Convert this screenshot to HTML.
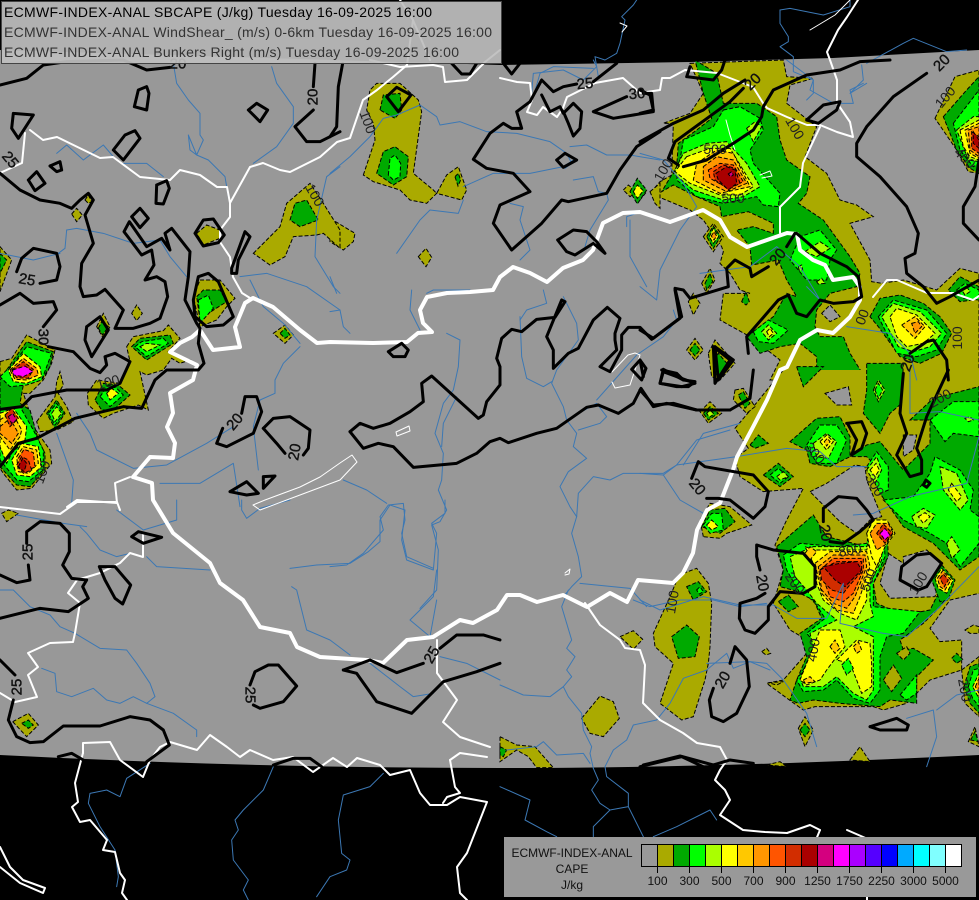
<!DOCTYPE html>
<html><head><meta charset="utf-8"><title>ECMWF-INDEX-ANAL SBCAPE</title>
<style>
html,body{margin:0;padding:0;background:#000;width:979px;height:900px;overflow:hidden}
svg{display:block;font-family:"Liberation Sans",sans-serif}
polygon{vector-effect:non-scaling-stroke;stroke:#000;stroke-width:1;stroke-dasharray:4 2}
polyline{vector-effect:non-scaling-stroke;fill:none;stroke-linejoin:round;stroke-linecap:round}
.o{fill:#aaaa00}.g{fill:#00aa00}.b{fill:#00ff00}.l{fill:#aaff00}.y{fill:#ffff00}.a{fill:#ffc800}.f{fill:#ff9600}.r{fill:#ff5500}.d{fill:#d22d00}.k{fill:#aa0000}.m{fill:#d4007f}.p{fill:#ff00ff}.h{fill:#989898}
.ns{stroke:none}
.dl{stroke:#000;stroke-width:1;stroke-dasharray:4 2;stroke-linecap:butt}
.riv polyline{stroke:#3c78b4;stroke-width:1}
.wt polyline{stroke:#fff;stroke-width:2}
.wth polyline{stroke:#fff;stroke-width:4}
.wl polyline{stroke:#fff;stroke-width:1}
.ct polyline{stroke:#000;stroke-width:3}
.c{font-size:15px;fill:#111;dominant-baseline:central;text-anchor:middle;stroke:#111;stroke-width:.4}
.t{font-size:14px;fill:#222;dominant-baseline:central;text-anchor:middle}
.lg{font-size:14px}
.cb{font-size:12px;fill:#111;text-anchor:middle}
</style></head><body>
<svg width="979" height="900" viewBox="0 0 979 900" xmlns="http://www.w3.org/2000/svg">
<rect width="979" height="900" fill="#000"/>
<path d="M0 50 L500 65 L690 62 L833 58 L979 50 L979 755 Q720 768 500 768 Q250 768 0 755Z" fill="#989898"/>

<!-- north-east fields -->
<g transform="translate(640,60) scale(.33333)">
<polygon class="o" points="150,10 430,0 440,50 520,55 450,75 440,130 530,200 495,290 560,340 600,420 650,435 700,470 630,490 690,600 695,665 725,670 790,660 890,690 960,625 1017,640 1017,960 390,960 420,900 330,830 240,780 250,700 330,700 300,690 270,640 240,610 250,575 245,560 190,480 150,450 30,400 60,365 95,345 100,190 70,190 150,160 190,100"/>
<polygon class="h" points="545,760 570,735 600,770 570,785"/>
<polygon class="g" points="165,0 230,40 250,130 350,130 410,170 420,240 440,300 510,350 500,400 475,430 550,480 630,590 660,640 650,680 570,700 530,750 525,800 540,830 610,830 630,880 670,945 530,945 530,890 480,850 420,860 360,880 320,830 400,770 440,700 470,710 440,660 415,600 335,615 330,560 290,510 340,500 400,520 400,490 325,455 245,470 240,440 170,410 100,375 65,395 110,320 115,250 170,210 215,175 190,100"/>
<polygon class="b" points="250,150 300,140 360,175 370,210 330,270 340,310 420,400 415,440 370,435 350,410 250,430 170,410 110,360 120,300 130,240 220,200"/>
<polygon class="l" points="130,280 200,250 260,245 320,310 360,380 310,410 250,420 160,390 100,340"/>
<polygon class="l" points="320,205 345,185 365,200 340,245"/>
<polygon class="y" points="140,290 210,265 270,265 340,380 300,405 240,405 150,370 105,335"/>
<polygon class="a" points="170,310 230,270 280,280 330,380 240,400 160,360"/>
<polygon class="f" points="190,320 230,290 280,300 320,370 260,395 190,360"/>
<polygon class="r" points="205,330 240,310 280,315 310,365 265,385 210,355"/>
<polygon class="d" points="220,335 250,315 285,325 300,370 265,388 225,360"/>
<polygon class="k" points="228,340 260,320 285,330 290,370 265,390 235,360"/>
<polygon class="m" points="265,342 275,335 280,345 272,350"/>
<polygon class="b" points="450,600 480,530 540,510 590,570 570,600 560,660 500,660"/>
<polygon class="l" points="495,575 540,545 570,565 530,590"/>
<polygon class="l" points="530,665 545,655 555,670 535,672"/>
<polygon class="l" points="475,620 485,615 488,630 478,632"/>
<polygon class="g" points="690,770 720,715 780,705 850,730 900,770 935,820 905,880 840,910 780,890 715,800"/>
<polygon class="b" points="715,770 760,720 860,750 920,820 890,870 830,890 770,880"/>
<polygon class="l" points="725,770 760,730 840,755 905,820 870,860 820,875 775,860"/>
<polygon class="y" points="750,770 770,745 830,765 885,820 850,850 800,860 770,830"/>
<polygon class="a" points="785,795 825,770 855,800 825,835"/>
<polygon class="f" points="815,790 835,785 845,800 825,820"/>
<polygon class="b" points="340,815 385,780 445,810 400,850 355,845"/>
<polygon class="l" points="365,815 385,795 410,820 385,840"/>
<polygon class="y" points="380,815 390,805 400,820 388,830"/>
<polygon class="g" points="925,690 960,650 1017,680 1000,720 960,725"/>
<polygon class="b" points="950,690 975,670 1017,690 1017,720 970,715"/>
<polygon class="l" points="965,690 980,680 990,695 975,705"/>
<polygon class="o" points="885,175 945,50 1017,30 1017,340 985,335 950,270"/>
<polygon class="g" points="910,170 980,90 1017,50 1017,340 990,325 950,270"/>
<polygon class="b" points="940,190 1017,90 1017,310 1000,320 960,270"/>
<polygon class="l" points="950,210 1000,170 1017,170 1017,305 985,300"/>
<polygon class="y" points="960,210 1017,180 1017,300 990,290 970,260"/>
<polygon class="a" points="975,210 1017,190 1017,295 990,280"/>
<polygon class="f" points="985,210 1017,200 1017,290 990,270"/>
<polygon class="d" points="995,215 1017,230 1017,280 995,265"/>
<polygon class="k" points="1000,215 1017,240 1017,265 1000,250"/>
<polygon class="o" points="190,530 220,490 250,530 220,575"/>
<polygon class="g" points="200,530 220,498 242,530 220,565"/>
<polygon class="y" points="208,530 220,505 236,530 220,550"/>
<polygon class="f" points="214,528 222,515 230,528 222,540"/>
<polygon class="o" points="0,370 20,395 0,420"/>
<polygon class="g" points="0,380 10,395 0,410"/>
<polygon class="o" points="140,870 165,835 190,870 165,900"/>
<polygon class="g" points="150,870 165,850 180,870 165,888"/>
<polygon class="o" points="205,880 225,840 285,910 240,960 215,950"/>
<polygon class="g" points="220,900 235,880 265,915 240,950 228,945"/>
<polygon class="o" points="185,670 210,625 225,660 200,700"/>
<polygon class="g" points="195,670 210,640 218,665 200,690"/>
<polygon class="g" points="305,725 318,695 328,725 318,735"/>
<polygon class="o" points="145,725 160,700 180,730 160,765"/>
</g>

<!-- south-east fields -->
<g transform="translate(640,370) scale(.33333)">
<polygon class="o ns" points="430,0 340,110 285,175 325,235 285,265 300,320 370,365 490,355 440,450 405,525 430,600 400,700 450,780 485,800 500,850 430,930 380,940 455,995 490,1020 525,1010 700,1010 730,1020 800,1000 840,960 870,930 965,900 965,810 900,815 870,775 930,690 1017,670 1017,0"/>
<polyline class="dl" points="430,0 340,110 285,175 325,235 285,265 300,320 370,365 490,355 440,450 405,525 430,600 400,700 450,780 485,800 500,850 430,930 380,940 455,995 490,1020 525,1010 700,1010 730,1020 800,1000 840,960 870,930 965,900 965,810 900,815 870,775 930,690 1017,670"/>
<polygon class="h" points="510,365 560,340 645,285 675,290 680,330 725,440 690,450 650,490 600,455"/>
<polygon class="h" points="555,70 625,50 635,105 590,105"/>
<polygon class="h" points="790,195 830,195 820,240 790,260"/>
<polygon class="h" points="745,550 790,580 790,560 860,540 910,590 885,680 750,685 720,640"/>
<polygon class="g" points="680,-20 790,-20 785,100 750,130 720,190 670,130 680,60"/>
<polygon class="l" points="700,60 715,30 735,60 715,95"/>
<polygon class="b" points="705,60 715,40 728,60 715,85"/>
<polygon class="g" points="470,-10 550,-10 490,50"/>
<polygon class="g" points="810,150 880,85 1017,50 1017,560 960,600 880,520 790,470 720,370 720,300 680,260 630,260 680,225 720,215 790,300 870,220 870,150"/>
<polygon class="b" points="870,150 940,95 1017,95 1017,200 940,190 915,215"/>
<polygon class="b" points="730,390 820,380 870,310 885,260 960,300 1000,360 990,420 1017,440 1017,520 960,590 920,520 870,490 790,450"/>
<polygon class="b" points="680,290 710,245 745,290 745,360 720,370"/>
<polygon class="l" points="680,300 710,260 725,300 705,340"/>
<polygon class="y" points="690,300 708,280 718,300 705,320"/>
<polygon class="l" points="900,290 950,310 985,390 960,420 910,360"/>
<polygon class="y" points="935,340 965,380 950,395 925,360"/>
<polygon class="l" points="815,440 850,415 885,435 860,475 830,470"/>
<polygon class="y" points="835,440 855,428 870,440 850,460"/>
<polygon class="l" points="920,520 935,500 960,540 935,565"/>
<polygon class="l" points="975,145 990,140 1000,150 985,155"/>
<polygon class="g" points="450,215 530,145 600,140 630,200 630,260 570,290 510,280 500,240"/>
<polygon class="b" points="500,225 540,165 590,165 620,210 590,280 530,280"/>
<polygon class="l" points="520,220 560,190 590,215 565,265 530,260"/>
<polygon class="y" points="540,215 560,195 580,215 560,240"/>
<polygon class="a" points="553,215 562,205 570,215 560,228"/>
<polygon class="g" points="370,315 415,280 460,320 420,350"/>
<polygon class="b" points="390,315 415,295 445,320 420,340"/>
<polygon class="l" points="410,320 430,305 445,320 420,330"/>
<polygon class="g" points="330,225 355,195 385,220 345,235"/>
<polygon class="g" points="410,530 520,435 560,500 680,530 690,460 740,455 745,560 700,640 710,700 790,735 870,720 890,680 935,660 900,710 850,760 780,810 790,840 820,835 880,870 830,920 830,1000 750,990 720,1010 600,1000 520,990 475,1000 450,990 470,930 500,860 480,790 545,745 525,700 495,670 420,650 430,600"/>
<polygon class="o" points="730,930 760,885 785,925 755,965"/>
<polygon class="o" points="770,850 800,830 810,850 790,870"/>
<polygon class="b" points="780,975 830,915 830,970 800,990"/>
<polygon class="g" points="415,695 445,675 475,710 445,725"/>
<polygon class="g" points="935,865 950,850 968,868 950,880"/>
<polygon class="b" points="430,555 480,520 590,530 680,520 695,470 730,460 735,560 700,640 700,710 840,725 790,790 740,800 720,860 720,960 690,1000 640,985 590,930 550,960 490,965 470,930 535,830 500,790 555,745 520,690 480,670 440,600"/>
<polygon class="l" points="450,560 520,530 680,530 700,480 725,470 725,570 690,640 690,700 700,740 640,770 700,800 700,960 680,990 640,970 590,920 550,950 490,950 480,925 520,830 510,790 550,770 590,750 530,700 500,660 465,620"/>
<polygon class="y" points="480,930 540,780 600,780 615,830 590,860 560,900 540,930 500,945"/>
<polygon class="y" points="590,870 630,830 650,810 690,820 695,880 695,950 665,970 650,930 630,880"/>
<polygon class="y" points="495,530 525,540 680,540 700,490 725,480 720,570 680,650 680,690 650,750 600,730 550,690 530,640 530,600"/>
<polygon class="b" points="605,885 625,865 640,895 620,915"/>
<polygon class="a" points="525,580 570,545 680,545 690,590 660,680 640,730 590,720 545,670"/>
<polygon class="f" points="535,590 580,555 675,555 680,590 645,680 620,715 580,700 545,660"/>
<polygon class="r" points="540,600 580,565 670,565 670,600 640,670 610,695 570,680"/>
<polygon class="d" points="540,600 590,575 665,575 665,605 625,650 610,670 575,660 545,630"/>
<polygon class="k" points="550,590 600,580 650,575 665,600 615,650 585,630"/>
<polygon class="a" points="570,830 585,810 600,835 585,850"/>
<polygon class="a" points="640,830 655,815 665,840 650,850"/>
<polygon class="a" points="490,930 510,920 525,935 495,940"/>
<polygon class="a" points="495,550 510,530 530,545 510,570"/>
<polygon class="y" points="680,490 700,450 740,450 765,490 735,530 710,590 695,560"/>
<polygon class="f" points="690,490 710,460 745,460 760,490 735,525 710,540"/>
<polygon class="d" points="710,490 730,462 758,490 735,520"/>
<polygon class="p" points="720,490 735,475 750,495 735,510"/>
<polygon class="g" points="875,630 905,585 945,630 925,690 900,695"/>
<polygon class="y" points="885,625 905,595 940,630 920,670 895,655"/>
<polygon class="f" points="892,625 908,602 933,630 915,660 900,650"/>
<polygon class="d" points="900,625 910,612 925,630 913,650"/>
<polygon class="o" points="130,610 170,595 205,640 215,700 210,830 205,880 195,930 160,1040 125,1050 60,1000 100,880 45,830 40,790 90,680 115,620"/>
<polygon class="g" points="95,800 140,765 178,800 165,860 115,865"/>
<polygon class="g" points="140,650 175,635 200,665 160,690"/>
<polygon class="b" points="170,660 180,650 190,665 178,672"/>
<polygon class="o" points="190,500 180,450 210,400 270,410 335,465 260,490 240,505"/>
<polygon class="g" points="185,470 210,420 255,415 285,455 240,490"/>
<polygon class="b" points="190,465 215,430 245,430 250,480 210,490"/>
<polygon class="y" points="200,465 215,450 235,470 215,480"/>
<polygon class="o" points="285,60 310,55 345,110 320,130 280,90"/>
<polygon class="g" points="295,75 310,65 330,100 315,115"/>
<polygon class="o" points="180,125 210,95 245,130 205,160"/>
<polygon class="g" points="190,130 210,110 235,130 205,150"/>
<polygon class="l" points="200,130 210,120 222,132 208,142"/>
<polygon class="o" points="365,845 380,835 392,850 378,855"/>
<polygon class="o" points="385,938 430,935 410,945"/>
<polygon class="o" points="475,1075 495,1040 520,1080 495,1130"/>
<polygon class="g" points="480,1080 495,1060 510,1080 495,1100"/>
<polygon class="o" points="630,1170 660,1130 690,1175"/>
<polygon class="o" points="380,1185 420,1175 440,1190"/>
<polygon class="o" points="985,1115 1005,1070 1017,1130"/>
<polygon class="g" points="992,1110 1005,1085 1015,1115"/>
<polygon class="o" points="965,900 1017,860 1017,1040 975,1000"/>
<polygon class="g" points="972,950 990,890 1017,880 1017,1030 990,1000"/>
<polygon class="b" points="985,950 1000,900 1017,895 1017,1010 998,985"/>
<polygon class="y" points="998,950 1017,910 1017,985"/>
<polygon class="f" points="1006,950 1017,925 1017,970"/>
<polygon class="o" points="975,780 1000,765 1017,770 1017,790 990,790"/>
</g>

<!-- south-centre olive -->
<g transform="translate(500,590) scale(.33333)">
<polygon class="o" points="245,385 300,318 340,335 358,385 310,440 270,430"/>
<polygon class="o" points="360,140 400,122 428,148 400,178"/>
<polygon class="o" points="0,440 50,465 105,470 160,533 110,533 85,500 50,480 0,515"/>
<polygon class="g" points="0,470 20,480 10,500 0,495"/>
</g>

<!-- north-centre -->
<g transform="translate(330,60) scale(.33333)">
<polygon class="o" points="100,345 135,240 130,190 110,150 120,90 140,70 210,70 265,120 275,155 250,340 310,390 320,400 350,345 385,320 410,390 395,420 320,400 290,430 240,420 210,390 130,365"/>
<polygon class="g" points="150,150 160,105 210,100 215,150 195,175"/>
<polygon class="g" points="140,340 160,275 195,260 235,290 230,350 190,375"/>
<polygon class="b" points="175,345 180,295 195,285 212,310 210,350 190,360"/>
<polygon class="g" points="375,350 385,340 392,360 384,378"/>
<polygon class="o" points="0,475 75,520 70,545 40,570 0,545"/>
<polygon class="o" points="265,590 288,565 305,592 288,620"/>
<polygon class="o" points="880,390 895,375 920,395 900,410"/>
<polygon class="g" points="900,395 922,355 950,390 922,432"/>
<polygon class="y" points="910,395 922,375 940,392 922,415"/>
<polygon class="o" points="960,395 990,370 990,445 975,430"/>
</g>

<!-- north-west -->
<g transform="translate(0,60) scale(.33333)">
<polygon class="o" points="760,580 840,500 860,430 930,370 970,430 1020,510 1020,565 970,520 950,525 880,530 855,590 810,615"/>
<polygon class="g" points="870,480 885,430 920,420 955,480 900,500"/>
<polygon class="o" points="590,520 620,495 660,510 660,535 610,555"/>
<polygon class="o" points="580,710 600,660 660,660 705,715 680,740 650,780 600,800"/>
<polygon class="g" points="590,710 610,690 660,690 680,725 625,760 600,780"/>
<polygon class="b" points="595,720 625,705 640,745 600,790"/>
<polygon class="o" points="820,820 855,795 880,825 855,850"/>
<polygon class="g" points="840,820 855,805 870,825 855,835"/>
<polygon class="o" points="215,462 230,445 247,465 230,485"/>
<polygon class="o" points="255,420 265,405 275,425 265,430"/>
<polygon class="o" points="395,760 410,735 427,760 410,782"/>
<polygon class="o" points="290,800 310,760 330,800 310,835"/>
<polygon class="g" points="295,805 305,785 325,800 308,825"/>
<polygon class="o" points="380,860 400,830 490,812 505,795 540,835 505,875 570,900 540,910 515,895 490,930 440,945 420,935 445,1050 415,1035 340,1060 310,1075 265,1035 262,1000 290,960 360,970 390,905"/>
<polygon class="g" points="395,860 420,835 510,825 520,850 440,900"/>
<polygon class="b" points="405,860 425,845 490,835 505,850 440,890"/>
<polygon class="l" points="420,860 440,850 480,855 440,875"/>
<polygon class="g" points="285,1020 310,970 355,975 390,1005 340,1050 305,1050"/>
<polygon class="b" points="300,1010 325,975 350,985 370,1005 330,1040"/>
<polygon class="y" points="320,1000 335,985 355,1000 330,1020"/>
<polygon class="o" points="110,1085 165,1010 170,965 180,935 190,975 175,1000 200,1040 220,1085 170,1110 120,1115"/>
<polygon class="g" points="140,1060 170,1020 195,1060 165,1105"/>
<polygon class="b" points="145,1060 170,1030 190,1060 165,1095"/>
<polygon class="l" points="155,1060 170,1040 185,1060 165,1085"/>
<polygon class="o" points="0,560 35,600 0,695"/>
<polygon class="g" points="0,580 20,600 0,640"/>
</g>

<!-- west hot spots -->
<g transform="translate(0,330) scale(.33333)">
<polygon class="o" points="0,95 35,85 80,15 165,60 155,100 130,150 90,190 70,190 85,235 100,290 150,360 155,400 95,475 50,480 10,430 0,415"/>
<polygon class="g" points="0,150 40,90 80,35 160,65 150,110 125,150 70,165 60,220 90,240 115,330 135,370 135,420 90,470 50,465 0,410"/>
<polygon class="b" points="0,140 40,100 80,50 155,70 140,110 125,150 80,165 30,170"/>
<polygon class="b" points="0,240 60,230 100,300 130,360 130,420 85,455 50,450 0,390"/>
<polygon class="y" points="25,120 70,70 120,110 125,140 80,160 40,155"/>
<polygon class="f" points="30,120 70,85 110,115 115,135 80,150 45,148"/>
<polygon class="d" points="35,120 70,95 100,118 85,145 50,143"/>
<polygon class="p" points="38,120 75,108 100,125 70,140 40,135"/>
<polygon class="y" points="0,250 40,235 80,290 75,330 35,370 20,400 0,350"/>
<polygon class="a" points="0,270 35,245 65,300 60,320 30,360 0,320"/>
<polygon class="f" points="0,290 30,265 55,310 35,340 0,310"/>
<polygon class="d" points="15,255 35,235 55,265 30,290"/>
<polygon class="m" points="25,260 38,250 50,270 35,280"/>
<polygon class="y" points="35,390 65,340 115,350 125,410 90,440 50,435"/>
<polygon class="a" points="50,380 70,350 110,360 115,400 85,430 55,425"/>
<polygon class="r" points="55,385 72,358 100,368 105,410 80,425"/>
<polygon class="d" points="50,405 65,380 85,390 95,420 70,430"/>
<polygon class="k" points="55,410 68,385 80,400 72,425"/>
</g>

<!-- south-west small -->
<g transform="translate(0,500) scale(.33333)">
<polygon class="o" points="5,40 25,30 55,40 20,65"/>
<polygon class="o" points="38,665 85,640 115,675 80,710"/>
<polygon class="g" points="65,670 85,660 100,675 85,685"/>
</g>

<!-- rivers -->
<g class="riv">
<g transform="translate(330,290) scale(.33333)">
<polyline points="245,0 240,60 270,120"/>
<polyline points="0,65 30,60 40,110 60,130"/>
<polyline points="700,20 740,100 745,150 680,240 665,280 700,350 710,390 740,430 730,470 770,505 715,545 690,590 720,650 740,680 725,730 745,800 755,860 725,890 700,920"/>
<polyline points="570,80 575,200 590,265 640,290 665,275"/>
<polyline points="710,390 800,340 830,380 810,400 745,420"/>
<polyline points="800,330 880,240 920,195 1000,140 1040,90 1030,60"/>
<polyline points="350,130 390,150 385,230 370,300 340,340 315,430 340,490 335,570 325,600 350,660 330,695 305,705 325,780 320,900 270,955"/>
<polyline points="380,320 340,400 335,470"/>
<polyline points="0,830 50,825 100,790 160,720 150,680 175,645 220,640 225,690 215,730 230,800 310,835"/>
<polyline points="40,570 110,600 170,640"/>
<polyline points="1200,420 1100,450 1040,525 1000,550 880,550 840,570 790,560 745,610 740,680"/>
<polyline points="1000,555 1050,630 1120,670"/>
<polyline points="750,880 900,895 950,950"/>
<polyline points="640,0 650,40 590,60 570,90"/>
</g>
<g transform="translate(330,60) scale(.33333)">
<polyline points="0,340 60,290 120,230 160,175 200,165 270,135 320,170 330,195 390,185 470,215 560,220 660,245 710,280 725,310 705,325"/>
<polyline points="400,380 490,340 600,340 700,320 730,300"/>
<polyline points="720,260 770,255 830,285 900,285 990,300"/>
<polyline points="200,580 270,480 300,450 385,460 400,420"/>
<polyline points="730,360 790,350 805,395 830,400 835,420 780,510 765,560"/>
<polyline points="890,500 890,470 935,455"/>
<polyline points="900,480 900,590 950,680"/>
<polyline points="605,100 610,40 700,30 760,60 800,20 790,0"/>
<polyline points="0,650 20,700"/>
<polyline points="290,700 310,690 420,690"/>
<polyline points="570,600 600,570 570,480 580,440 540,430"/>
</g>
<g transform="translate(0,60) scale(.33333)">
<polyline points="520,10 530,70 565,120 600,160 600,225 610,240 590,285 565,225 570,270 590,285 625,300 675,350 685,410"/>
<polyline points="815,20 830,70 880,140 880,190 830,260 760,310"/>
<polyline points="1020,320 980,350 950,480 945,590 1000,680 1020,700"/>
<polyline points="170,280 200,255 250,300 310,255 340,290"/>
<polyline points="370,310 440,310 490,350"/>
<polyline points="200,510 230,505 310,520 400,550 480,540 510,590 560,650"/>
<polyline points="180,580 100,600 0,580"/>
<polyline points="200,510 195,565 175,580"/>
<polyline points="720,650 800,640 920,680 1020,750"/>
<polyline points="750,660 790,740 850,790 900,850"/>
<polyline points="900,860 850,910 825,960 825,1000 780,1020 760,1100 775,1230"/>
<polyline points="230,1060 270,1120 290,1170 400,1225 500,1215 620,1150 700,1100"/>
<polyline points="170,1120 220,1260 215,1330"/>
<polyline points="480,1270 600,1270 700,1210 720,1340"/>
</g>
<g transform="translate(0,500) scale(.33333)">
<polyline points="0,270 40,270 90,320 150,345 180,380 225,400 300,445 380,450 410,490 450,550 465,590 440,610 520,640 590,690 590,710"/>
<polyline points="125,505 165,520 170,575 215,590 280,565 320,600 360,610 400,590 440,610"/>
<polyline points="240,80 260,100 300,150 350,170 390,160"/>
<polyline points="50,45 190,70 260,80"/>
<polyline points="350,30 430,90 530,60 530,0"/>
<polyline points="440,170 470,200 630,210"/>
<polyline points="870,205 950,195 1050,190 1105,155 1140,125 1140,60 1170,15 1215,30 1205,120 1220,180 1300,210 1310,100 1295,70 1335,40 1335,0"/>
<polyline points="875,260 890,270 920,390 990,420 1050,465"/>
<polyline points="1310,210 1300,290 1230,360 1290,410 1310,300"/>
<polyline points="1110,490 1200,560 1240,590 1300,580"/>
<polyline points="1320,470 1400,490 1500,540"/>
<polyline points="725,0 725,30 740,55 780,25 870,0"/>
<polyline points="820,800 790,870 730,930 705,960 715,990 695,1020 700,1080 745,1140 730,1170 745,1200"/>
<polyline points="1150,820 1110,860 1030,885 1015,960 1025,1060 1050,1080 1040,1110 990,1130 950,1190"/>
<polyline points="450,790 380,835 360,890 320,870 270,880 265,910 300,980 345,1050 355,1130 350,1160"/>
</g>
<g transform="translate(500,590) scale(.33333)">
<polyline points="280,535 295,570 275,600 300,640 330,660 385,650 385,610 320,560 315,530"/>
<polyline points="330,660 280,710 280,740"/>
<polyline points="385,650 430,740"/>
<polyline points="0,590 90,630 75,690 140,725 170,740"/>
<polyline points="460,740 530,710 630,660 650,690"/>
<polyline points="205,0 185,50 215,150 200,175 225,200 200,240 215,260 190,290 150,320 70,315 0,285"/>
<polyline points="190,290 205,320 245,370 250,420 275,470 270,490 280,535"/>
<polyline points="315,530 340,480 380,450 400,405 470,390 510,340 550,265 620,240 680,190 700,235 750,215 810,240"/>
<polyline points="400,30 450,50 540,30 640,30 720,50 800,40"/>
<polyline points="20,480 110,470 130,455 170,495 250,490 270,520"/>
</g>
<g transform="translate(500,0) scale(.33333)">
<polyline points="410,0 400,15 365,50 375,60 360,130 350,160 315,180 285,170 295,230"/>
<polyline points="840,30 870,25 970,45 1050,20 1050,0"/>
<polyline points="840,30 840,70 865,110 865,125 840,140 880,170 880,215 940,240 940,280 920,300"/>
<polyline points="1100,190 1210,130 1240,115 1340,155 1400,150"/>
<polyline points="1085,195 1090,240 1050,280 1100,250"/>
<polyline points="100,290 120,220 160,200 280,205"/>
</g>
<g transform="translate(640,370) scale(.33333)">
<polyline points="0,310 70,315 110,285 290,260 440,235 540,245 590,290 680,290"/>
<polyline points="300,160 190,190 130,285"/>
<polyline points="0,690 60,720 190,680 300,705 400,705 470,745 560,745 610,640 600,760 730,790 800,800 890,720 1017,590"/>
<polyline points="200,880 330,875 380,880 430,930 500,1030 530,1130"/>
<polyline points="800,1045 880,1020 890,1100 860,1190"/>
<polyline points="890,1020 950,975 1017,960"/>
<polyline points="640,435 700,430 810,380 980,340 1017,200"/>
<polyline points="810,130 810,0"/>
<polyline points="810,130 900,125 1017,150"/>
</g>
<g transform="translate(640,60) scale(.33333)">
<polyline points="0,280 70,300 130,370 170,440 120,510 60,630 50,720 0,680"/>
<polyline points="180,640 330,620 410,560 480,620 540,720 500,680"/>
<polyline points="620,800 750,820 810,880 830,960"/>
<polyline points="440,0 520,60 510,90 580,130 640,130 630,90 670,70"/>
</g>
</g>

<!-- thin white borders -->
<g class="wt">
<polyline points="30,130 43,140 57,137 100,158 113,157 140,177 170,180 180,170 200,175 217,187 227,187 230,203 250,167 263,163 280,170 290,172 320,157 337,142 350,138 363,100 377,90 393,77 407,65 413,20 400,0"/>
<polyline points="230,203 230,217 220,230 220,242 230,257 233,277 242,293 250,298"/>
<polyline points="25,133 22,163 0,173"/>
<polyline points="370,60 400,67 433,65 443,67 445,82 467,80 485,62 500,50"/>
<polyline points="413,20 430,60"/>
<polyline points="500,78 517,82 530,83 532,100 527,112 537,115 543,107 557,117 563,108 567,97 595,83 623,78 640,93 660,90 662,78 670,78 685,70 717,73 753,87 763,103 767,108 787,117 807,125 820,125 837,132 853,137 850,122 837,103 837,80 830,60 827,52 838,30 847,17 858,0"/>
<polyline points="820,127 803,163 800,187 780,207 780,233"/>
<polyline points="873,297 887,280 897,280 927,293 953,293 973,300 979,296"/>
<polyline points="67,507 77,500 117,503 115,483 130,477"/>
<polyline points="0,507 60,514 77,502 117,502 120,510"/>
<polyline points="143,533 143,557 130,553 120,563 100,573 77,580 68,593 80,603 75,633 73,642 50,643 28,653 38,667 28,675 37,697 15,702 0,693"/>
<polyline points="83,753 83,743 110,742 120,760 143,777 150,760 160,747 170,742 197,750 210,735 227,747 240,757 250,750 273,760 293,757 313,772 333,758 347,767 357,758 380,765 390,775 410,770 420,793 430,805 447,805 460,797 487,802 467,853 457,867 460,893 467,900"/>
<polyline points="437,640 437,673 457,700 443,722 460,737 490,747"/>
<polyline points="450,760 460,753 487,757"/>
<polyline points="450,760 455,787 460,793 447,797 443,803"/>
<polyline points="83,753 75,783 78,802 72,807 80,822 90,820 107,840 103,850 115,852 120,873 125,880 122,893 127,900"/>
<polyline points="0,847 10,867 23,880 45,888 43,893 20,883 0,867"/>
<polyline points="585,603 600,625 620,640 625,648 640,650 645,665 643,703 660,720 683,733 697,743 720,747 727,760 720,770 715,780 725,790 730,800 720,815 743,830 765,832 787,833"/>
<polyline points="820,830 813,847 847,870 867,890 867,900"/>
<polyline points="847,830 877,843"/>
<polyline points="787,833 810,825 820,830"/>
</g>
<g class="wl">
<polyline points="253,505 265,500 300,487 320,477 340,463 352,455 357,462 340,480 300,495 260,510 253,505"/>
<polyline points="396,432 409,426 410,431 397,436 396,432"/>
<polyline points="620,23 627,26 622,32"/>
<polyline points="565,573 570,569 569,574 565,575"/>
<polyline points="612,372 628,355 635,353 640,355 630,385 615,388 612,382"/>
<polyline points="760,175 770,171 772,176 762,178"/>
<polyline points="726,120 730,135 735,150"/>
<polyline points="850,0 835,15 810,30"/>
</g>

<!-- thick white Hungary border -->
<g class="wth">
<polyline points="133,477 150,457 173,458 175,443 167,427 173,413 170,393 193,380 197,365 170,352 180,343 192,337 200,330 213,350 240,347 235,327 245,303 253,298 273,307 300,330 317,343 330,342 373,343 407,342 418,333 432,332 423,323 420,310 427,297 447,293 470,292 493,290 500,277 513,267 530,273 547,282 563,268 583,260 593,250 603,223 623,213 640,212 670,222 703,210 720,220 730,237 747,247 787,233 797,234 800,250 813,260 825,265 833,280 853,277 860,287 860,300 850,317 833,333 817,330 800,340 787,367 780,370 767,400 753,427 737,457 733,470 720,503 707,510 697,530 693,553 683,573 673,583 638,580 627,602 610,593 587,607 563,595 537,602 520,595 507,595 497,610 473,623 460,620 433,637 407,640 383,663 367,660 320,657 297,647 290,633 260,627 243,600 220,583 210,563 173,533 153,500 152,483 133,477"/>
</g>

<!-- black contours -->
<g class="ct">
<g transform="translate(0,60) scale(.33333)">
<polyline points="0,75 80,55 130,15 200,5 370,0 440,30 510,22"/>
<polyline points="945,10 940,80"/>
<polyline points="940,150 885,200 920,245 960,245 1020,215"/>
<polyline points="440,80 415,90 403,140 440,150 447,100 440,80"/>
<polyline points="40,160 100,165 55,235 35,205 40,160"/>
<polyline points="340,270 375,225 405,212 420,235 370,300 340,270"/>
<polyline points="745,150 770,130 803,150 780,185 745,150"/>
<polyline points="85,360 110,335 135,370 105,392 85,360"/>
<polyline points="150,318 180,305 185,330 170,335 150,318"/>
<polyline points="0,340 60,390 120,420 180,430 215,445 240,420 265,400 280,420 255,465 280,550 245,610 240,680 250,710 290,705 315,688 370,750 345,805 400,805 450,790 480,775 503,710 495,665 470,650 435,660 462,615 455,570 425,585 372,515 388,485 440,560 485,535 510,570 495,520 515,505 570,575 565,650 555,720 590,790 600,805 595,850 612,910 595,930 500,930 465,960 425,1045 370,1040 225,1075 110,1135 55,1150 0,1220"/>
<polyline points="395,470 420,445 445,475 420,503 395,470"/>
<polyline points="470,375 500,362 508,385 490,432 468,430 470,375"/>
<polyline points="585,520 610,480 640,477 673,525 655,548 610,558 585,520"/>
<polyline points="580,720 595,650 625,640 655,665 700,770 670,795 620,800 585,770 580,720"/>
<polyline points="695,625 735,515 750,530 715,600 710,640 695,640 695,625"/>
<polyline points="50,635 65,595 100,565 170,580 180,620 170,660 120,670"/>
<polyline points="0,735 60,700 100,730 160,725 170,750 130,800"/>
<polyline points="145,860 220,875 270,925 300,938 320,915 315,890 345,880 390,905 360,970 320,990 200,990 95,1010 65,1040 0,1048"/>
<polyline points="260,800 300,770 325,810 275,890 255,840 260,800"/>
<polyline points="668,1105 650,1150 680,1160 760,1120 785,1055 770,1010 735,1010 725,1060"/>
<polyline points="790,1105 820,1075 870,1070 930,1110 925,1165 910,1185"/>
<polyline points="790,1105 830,1150 855,1180"/>
<polyline points="690,1295 740,1265 775,1300 740,1305 690,1295"/>
<polyline points="790,1250 825,1248 790,1285 790,1250"/>
</g>
<g transform="translate(0,500) scale(.33333)">
<polyline points="395,110 415,95 485,112 430,130 395,110"/>
<polyline points="80,130 80,95 120,65 180,70 208,100 208,155 188,195 215,235 260,240 248,260 265,295 205,335 120,325 0,355"/>
<polyline points="0,225 50,248 90,240 85,195"/>
<polyline points="298,200 345,200 392,255 368,312 345,295 315,240 298,200"/>
<polyline points="0,480 45,525"/>
<polyline points="40,600 25,660 50,710 90,728 130,725 190,678 300,678 390,650 450,660 490,690 508,735 440,785"/>
<polyline points="175,770 215,760 250,780"/>
<polyline points="820,795 880,775 930,775 965,800"/>
<polyline points="750,555 765,515 805,495 835,495 890,558 850,605 780,625 760,615"/>
<polyline points="1030,510 1110,480 1190,518 1270,490"/>
<polyline points="1320,445 1370,405 1450,405 1500,420"/>
<polyline points="1030,510 1070,520 1130,605 1235,640 1330,545 1430,515 1500,490"/>
</g>
<g transform="translate(330,60) scale(.33333)">
<polyline points="38,10 25,80 20,200 0,230"/>
<polyline points="170,110 200,82 243,105 205,155 170,110"/>
<polyline points="365,10 395,42 420,42 440,10"/>
<polyline points="520,10 545,42 570,10"/>
<polyline points="740,72 700,80 670,95 635,60 600,125 560,155 575,205 545,205 520,190 480,220 430,298 470,325 550,340 600,395 510,435 490,490 545,570 635,490 695,420 715,425 830,400 870,330 920,260 990,215"/>
<polyline points="790,65 860,10"/>
<polyline points="890,110 790,155 850,175 970,155 965,100 940,100"/>
<polyline points="635,105 660,155 690,140 700,160 730,130 755,155 750,205 730,228 715,190 700,155"/>
<polyline points="680,300 705,280 740,300 700,322 680,300"/>
<polyline points="683,540 730,510 770,515 800,545 825,580 790,550 735,585 710,575 683,540"/>
</g>
<g transform="translate(330,290) scale(.33333)">
<polyline points="175,185 215,160 235,180 225,200 190,200 175,185"/>
<polyline points="60,425 90,400 130,415 180,400 240,365 280,335 275,280 305,258 445,385 460,375 470,335 510,285 510,230 500,205 515,145 545,118 575,125 620,88 675,82 705,35 695,30 650,140 670,180 670,235 715,190 745,175 790,90 832,52 870,85 855,130 855,150 860,180 810,230 840,245 875,180 875,135 895,112 930,112 965,148 1050,85 1035,0"/>
<polyline points="60,425 100,475 145,460 190,470 250,532 380,520 440,490 480,455 510,445 535,458 620,430 680,415 770,352 805,345 865,370 910,340 933,295 970,350 1010,340 1100,360 1200,360"/>
<polyline points="905,238 930,210 948,235 935,270 905,238"/>
<polyline points="1000,238 1060,270 1095,275 1075,290 1040,290 990,280 1000,238"/>
<polyline points="1150,170 1200,210 1155,280 1150,170"/>
</g>
<g transform="translate(640,60) scale(.33333)">
<polyline points="0,245 100,190 190,150 250,100 315,60"/>
<polyline points="115,315 85,295 105,245 160,205 270,125 310,85"/>
<polyline points="130,320 200,300 280,250 340,210 365,170 370,140 400,90 500,45 600,30 660,5 750,0"/>
<polyline points="150,20 140,50 220,60 245,30 255,0"/>
<polyline points="500,180 550,135 600,125 590,150 535,190 500,180"/>
<polyline points="860,40 760,110 680,200 650,250 650,290 720,350 800,440 835,520 825,580 795,595 800,640 850,680 890,730 930,710 1017,660"/>
<polyline points="1017,300 1005,380 970,440 970,490 1017,540"/>
<polyline points="0,90 30,105 40,150 0,160"/>
<polyline points="465,520 440,560"/>
<polyline points="385,620 335,650 330,625 285,600 260,625 265,680 150,715 130,690 105,685 125,770 40,835 0,810"/>
<polyline points="470,520 540,580 620,620 655,650 665,710 640,725 580,730 540,720 500,770 470,760 445,705 415,720 320,830 325,880"/>
<polyline points="810,880 860,845 880,840 920,900 925,960"/>
<polyline points="65,930 110,940 130,960"/>
<polyline points="225,860 280,900 235,960 225,860"/>
<polyline points="0,900 10,950"/>
</g>
<g transform="translate(640,370) scale(.33333)">
<polyline points="70,5 165,40 125,50 60,40 70,5"/>
<polyline points="0,60 40,105 100,100 170,120 270,120 330,85 340,0"/>
<polyline points="790,10 780,130 800,190 770,255 810,320 845,310 845,270 830,235 860,140 925,0"/>
<polyline points="620,160 665,155 680,190 665,235 635,255 650,210 625,165"/>
<polyline points="850,345 858,330 870,340 860,352 850,345"/>
<polyline points="155,325 175,275 195,290 340,315 385,365 375,410 340,445 270,390 235,385 200,385"/>
<polyline points="550,455 550,415 595,380 650,385 680,420 700,450 660,485 610,520 570,515"/>
<polyline points="360,600 350,560 350,525 400,540 490,550 525,590 525,650 490,670 420,665 385,710 385,750 345,790 315,780 298,745 300,700 350,685 375,670"/>
<polyline points="905,580 870,550 830,555 785,590 780,630 835,660 860,650 905,580"/>
<polyline points="270,880 285,830 320,870 328,950 290,1030 250,1055 215,1040 208,990 220,955"/>
<polyline points="690,1070 770,1045 805,1065 800,1080 720,1080 690,1070"/>
<polyline points="0,1190 125,1160 200,1195"/>
</g>
<g transform="translate(500,590) scale(.33333)">
<polyline points="430,525 540,498 640,525 690,510 760,520"/>
</g>
</g>

<!-- contour labels -->
<g>
<text class="c" transform="translate(178,64)">20</text>
<text class="c" transform="translate(313,97) rotate(-90)">20</text>
<text class="c" transform="translate(10,160) rotate(50)">25</text>
<text class="c" transform="translate(27,280) rotate(10)">25</text>
<text class="c" transform="translate(43,337) rotate(90)">30</text>
<text class="c" transform="translate(235,422) rotate(-50)">20</text>
<text class="c" transform="translate(295,452) rotate(-80)">20</text>
<text class="c" transform="translate(585,84) rotate(-5)">25</text>
<text class="c" transform="translate(637,94) rotate(-5)">30</text>
<text class="c" transform="translate(17,687) rotate(-90)">25</text>
<text class="c" transform="translate(28,552) rotate(-90)">25</text>
<text class="c" transform="translate(250,695) rotate(90)">25</text>
<text class="c" transform="translate(432,655) rotate(-60)">25</text>
<text class="c" transform="translate(753,82) rotate(-45)">20</text>
<text class="c" transform="translate(942,63) rotate(-45)">20</text>
<text class="c" transform="translate(778,257) rotate(-50)">20</text>
<text class="c" transform="translate(908,363) rotate(-70)">20</text>
<text class="c" transform="translate(723,680) rotate(-60)">20</text>
<text class="c" transform="translate(697,487) rotate(50)">20</text>
<text class="c" transform="translate(762,583) rotate(80)">20</text>
<text class="c" transform="translate(825,533) rotate(80)">20</text>
<text class="t" transform="translate(108,382) rotate(-15)">100</text>
<text class="t" transform="translate(315,195) rotate(60)">100</text>
<text class="t" transform="translate(42,472) rotate(-70)">100</text>
<text class="t" transform="translate(368,122) rotate(70)">100</text>
<text class="t" transform="translate(663,170) rotate(-60)">100</text>
<text class="t" transform="translate(715,149)">500</text>
<text class="t" transform="translate(733,198)">500</text>
<text class="t" transform="translate(795,128) rotate(60)">100</text>
<text class="t" transform="translate(945,97) rotate(-50)">100</text>
<text class="t" transform="translate(862,317) rotate(-70)">00</text>
<text class="t" transform="translate(957,338) rotate(-90)">100</text>
<text class="t" transform="translate(965,158) rotate(45)">400</text>
<text class="t" transform="translate(672,602) rotate(-80)">100</text>
<text class="t" transform="translate(815,453) rotate(50)">300</text>
<text class="t" transform="translate(875,485) rotate(60)">300</text>
<text class="t" transform="translate(795,583) rotate(55)">200</text>
<text class="t" transform="translate(850,550) rotate(-10)">800</text>
<text class="t" transform="translate(868,580) rotate(-70)">500</text>
<text class="t" transform="translate(813,650) rotate(-80)">400</text>
<text class="t" transform="translate(918,583) rotate(-60)">100</text>
<text class="t" transform="translate(940,398) rotate(-30)">200</text>
<text class="t" transform="translate(965,690) rotate(80)">200</text>
</g>

<!-- top legend -->
<rect x="1.5" y="1.5" width="500" height="62" fill="#bebebe" fill-opacity=".93" stroke="#444" stroke-width="1"/>
<text class="lg" x="4" y="17" fill="#000" textLength="428" lengthAdjust="spacing">ECMWF-INDEX-ANAL SBCAPE (J/kg) Tuesday 16-09-2025 16:00</text>
<text class="lg" x="4" y="37" fill="#333" textLength="488" lengthAdjust="spacing">ECMWF-INDEX-ANAL WindShear_ (m/s) 0-6km Tuesday 16-09-2025 16:00</text>
<text class="lg" x="4" y="57" fill="#333" textLength="455" lengthAdjust="spacing">ECMWF-INDEX-ANAL Bunkers Right (m/s) Tuesday 16-09-2025 16:00</text>

<!-- bottom legend -->
<rect x="504" y="837" width="472" height="60" fill="#999"/>
<text class="cb" x="572" y="857" textLength="121" lengthAdjust="spacing">ECMWF-INDEX-ANAL</text>
<text class="cb" x="572" y="873">CAPE</text>
<text class="cb" x="572" y="889">J/kg</text>
<g stroke="#000" stroke-width="1">
<rect x="641.5" y="844.5" width="16" height="22" fill="#999"/>
<rect x="657.5" y="844.5" width="16" height="22" fill="#aaaa00"/>
<rect x="673.5" y="844.5" width="16" height="22" fill="#00aa00"/>
<rect x="689.5" y="844.5" width="16" height="22" fill="#00ff00"/>
<rect x="705.5" y="844.5" width="16" height="22" fill="#aaff00"/>
<rect x="721.5" y="844.5" width="16" height="22" fill="#ffff00"/>
<rect x="737.5" y="844.5" width="16" height="22" fill="#ffc800"/>
<rect x="753.5" y="844.5" width="16" height="22" fill="#ff9600"/>
<rect x="769.5" y="844.5" width="16" height="22" fill="#ff5500"/>
<rect x="785.5" y="844.5" width="16" height="22" fill="#d22d00"/>
<rect x="801.5" y="844.5" width="16" height="22" fill="#aa0000"/>
<rect x="817.5" y="844.5" width="16" height="22" fill="#d4007f"/>
<rect x="833.5" y="844.5" width="16" height="22" fill="#ff00ff"/>
<rect x="849.5" y="844.5" width="16" height="22" fill="#aa00ff"/>
<rect x="865.5" y="844.5" width="16" height="22" fill="#5500ff"/>
<rect x="881.5" y="844.5" width="16" height="22" fill="#0000ff"/>
<rect x="897.5" y="844.5" width="16" height="22" fill="#00aaff"/>
<rect x="913.5" y="844.5" width="16" height="22" fill="#00ffff"/>
<rect x="929.5" y="844.5" width="16" height="22" fill="#80ffff"/>
<rect x="945.5" y="844.5" width="16" height="22" fill="#ffffff"/>
<path fill="none" d="M657.5 867V873M689.5 867V873M721.5 867V873M753.5 867V873M785.5 867V873M817.5 867V873M849.5 867V873M881.5 867V873M913.5 867V873M945.5 867V873"/>
</g>
<text class="cb" x="657.5" y="885">100</text>
<text class="cb" x="689.5" y="885">300</text>
<text class="cb" x="721.5" y="885">500</text>
<text class="cb" x="753.5" y="885">700</text>
<text class="cb" x="785.5" y="885">900</text>
<text class="cb" x="817.5" y="885">1250</text>
<text class="cb" x="849.5" y="885">1750</text>
<text class="cb" x="881.5" y="885">2250</text>
<text class="cb" x="913.5" y="885">3000</text>
<text class="cb" x="945.5" y="885">5000</text>
</svg>
</body></html>
